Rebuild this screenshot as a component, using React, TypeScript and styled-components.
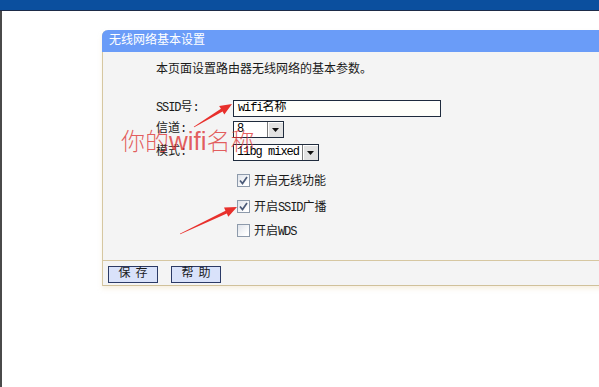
import React from "react";
import styled, { createGlobalStyle } from "styled-components";

const GlobalStyle = createGlobalStyle`
  html, body { margin: 0; padding: 0; background: #ffffff; overflow: hidden; }
  body { font-family: "Liberation Mono", "Noto Sans CJK SC", monospace; }
`;

const CJK = `"Liberation Mono", "Noto Sans CJK SC", monospace`;

const Page = styled.div`
  position: relative;
  width: 599px;
  height: 387px;
  overflow: hidden;
  background: #ffffff;
`;

const TopBar = styled.div`
  height: 10px;
  background: #0b4f9e;
  border-bottom: 1px solid #1d2b48;
`;

const Main = styled.div`
  height: 376px;
  box-sizing: border-box;
  border-left: 2px solid #4a4a4a;
  padding: 19px 0 0 100px;
`;

const Panel = styled.div`
  width: 520px;
  border-left: 1px solid #d6c7a1;
  border-top-left-radius: 6px;
  box-shadow: 0 3px 4px rgba(240, 228, 200, 0.5);
`;

const PanelHeader = styled.div`
  height: 22px;
  line-height: 22px;
  margin-left: -1px;
  padding-left: 7px;
  background: #6a9cf8;
  color: #ffffff;
  font-family: ${CJK};
  font-size: 12px;
  border-top-left-radius: 6px;
`;

const PanelBody = styled.div`
  height: 208px;
  box-sizing: border-box;
  background: #f4f4f4;
  padding: 10px 0 0 53px;
  color: #1a1a1a;
  font-family: ${CJK};
  font-size: 12px;
`;

const Intro = styled.div`
  height: 16px;
  line-height: 16px;
`;

const Narrow = styled.span`
  letter-spacing: -1.1px;
`;

const FieldRow = styled.div<{ $mt: number }>`
  display: grid;
  grid-template-columns: 77px auto;
  align-items: center;
  height: 17px;
  margin-top: ${(p) => p.$mt}px;
`;

const Label = styled.span`
  line-height: 17px;
`;

const TextInput = styled.div`
  width: 208px;
  height: 17px;
  box-sizing: border-box;
  border: 1px solid #1f2b3d;
  background: #fffffa;
  padding-left: 4px;
  line-height: 15px;
  font-size: 12px;
  color: #000;
`;

const Select = styled.div<{ $w: number }>`
  display: flex;
  width: ${(p) => p.$w}px;
  height: 17px;
  box-sizing: border-box;
  border: 1px solid #1f2b3d;
  background: #ffffff;
`;

const SelectValue = styled.span`
  flex: 1;
  padding-left: 3px;
  line-height: 15px;
  font-size: 12px;
  letter-spacing: -1px;
  color: #000;
  white-space: nowrap;
  overflow: hidden;
`;

const SelectButton = styled.span`
  width: 15px;
  display: flex;
  align-items: center;
  justify-content: center;
  background: #e2e2e2;
  border-left: 1px solid #7a7a7a;
  box-shadow: inset 1px 1px 0 #ffffff;
`;

const CheckRow = styled.div<{ $mt: number }>`
  display: flex;
  align-items: center;
  height: 14px;
  margin-top: ${(p) => p.$mt}px;
  padding-left: 81px;
  gap: 4px;
`;

const Box = styled.span`
  width: 13px;
  height: 13px;
  box-sizing: border-box;
  border: 1px solid #8d9aab;
  background: linear-gradient(135deg, #dfe3ea 0%, #ffffff 80%);
  display: flex;
  align-items: center;
  justify-content: center;
`;

const ButtonBar = styled.div`
  height: 26px;
  box-sizing: border-box;
  border-top: 1px solid #d6c7a1;
  border-bottom: 1px solid #d0c19a;
  background: #f4f4f4;
  display: flex;
  align-items: center;
  gap: 13px;
  padding: 2px 0 0 5px;
`;

const Button = styled.div`
  width: 50px;
  height: 17px;
  box-sizing: border-box;
  border: 1px solid #2b3a66;
  background: #d9e2fa;
  color: #1a1a1a;
  font-family: ${CJK};
  font-size: 12px;
  line-height: 15px;
  text-align: center;
  letter-spacing: 5px;
  padding-left: 5px;
`;

const Overlay = styled.svg`
  position: absolute;
  left: 0;
  top: 0;
  pointer-events: none;
`;

const Annotation = styled.div`
  position: absolute;
  left: 121px;
  top: 125px;
  font-family: "Noto Sans CJK SC", sans-serif;
  font-size: 24px;
  line-height: 30px;
  color: rgba(222, 52, 52, 0.78);
  font-weight: 300;
  white-space: nowrap;
`;

const Latin = styled.span`
  font-family: "Liberation Sans", Arial, sans-serif;
  font-size: 26px;
`;

const Arrow: React.FC<{ tail: [number, number]; tip: [number, number] }> = ({ tail, tip }) => {
  const dx = tip[0] - tail[0];
  const dy = tip[1] - tail[1];
  const len = Math.hypot(dx, dy);
  const ux = dx / len;
  const uy = dy / len;
  const nx = -uy;
  const ny = ux;
  const bx = tip[0] - 12 * ux;
  const by = tip[1] - 12 * uy;
  const pts: [number, number][] = [
    [tail[0] + 0.4 * nx, tail[1] + 0.4 * ny],
    [bx + 1.6 * nx, by + 1.6 * ny],
    [bx + 5 * nx, by + 5 * ny],
    [tip[0], tip[1]],
    [bx - 5 * nx, by - 5 * ny],
    [bx - 1.6 * nx, by - 1.6 * ny],
    [tail[0] - 0.4 * nx, tail[1] - 0.4 * ny],
  ];
  return <polygon points={pts.map((p) => p.join(",")).join(" ")} fill="#e8302c" />;
};

const Caret = () => (
  <svg width="7" height="4" viewBox="0 0 7 4">
    <polygon points="0,0 7,0 3.5,4" fill="#111" />
  </svg>
);

const Check: React.FC<{ on: boolean }> = ({ on }) => (
  <Box>
    {on && (
      <svg width="9" height="9" viewBox="0 0 9 9">
        <polyline points="1,4.5 3.5,7.5 8,1" fill="none" stroke="#4b5a78" strokeWidth="1.7" />
      </svg>
    )}
  </Box>
);

export default function App() {
  return (
    <Page>
      <GlobalStyle />
      <TopBar />
      <Main>
        <Panel>
          <PanelHeader>无线网络基本设置</PanelHeader>
          <PanelBody>
            <Intro>本页面设置路由器无线网络的基本参数。</Intro>
            <FieldRow $mt={22}>
              <Label><Narrow>SSID</Narrow>号:</Label>
              <TextInput><Narrow>wifi</Narrow>名称</TextInput>
            </FieldRow>
            <FieldRow $mt={4}>
              <Label>信道:</Label>
              <Select $w={51}>
                <SelectValue>8</SelectValue>
                <SelectButton><Caret /></SelectButton>
              </Select>
            </FieldRow>
            <FieldRow $mt={6}>
              <Label>模式:</Label>
              <Select $w={86}>
                <SelectValue>11bg mixed</SelectValue>
                <SelectButton><Caret /></SelectButton>
              </Select>
            </FieldRow>
            <CheckRow $mt={12}>
              <Check on />
              <span>开启无线功能</span>
            </CheckRow>
            <CheckRow $mt={12}>
              <Check on />
              <span>开启<Narrow>SSID</Narrow>广播</span>
            </CheckRow>
            <CheckRow $mt={10}>
              <Check on={false} />
              <span>开启<Narrow>WDS</Narrow></span>
            </CheckRow>
          </PanelBody>
          <ButtonBar>
            <Button>保存</Button>
            <Button>帮助</Button>
          </ButtonBar>
        </Panel>
      </Main>
      <Annotation>
        你的<Latin>wifi</Latin>名称
      </Annotation>
      <Overlay width="599" height="387" viewBox="0 0 599 387">
        <Arrow tail={[194, 127]} tip={[232, 104]} />
        <Arrow tail={[180, 234]} tip={[237, 207]} />
      </Overlay>
    </Page>
  );
}
